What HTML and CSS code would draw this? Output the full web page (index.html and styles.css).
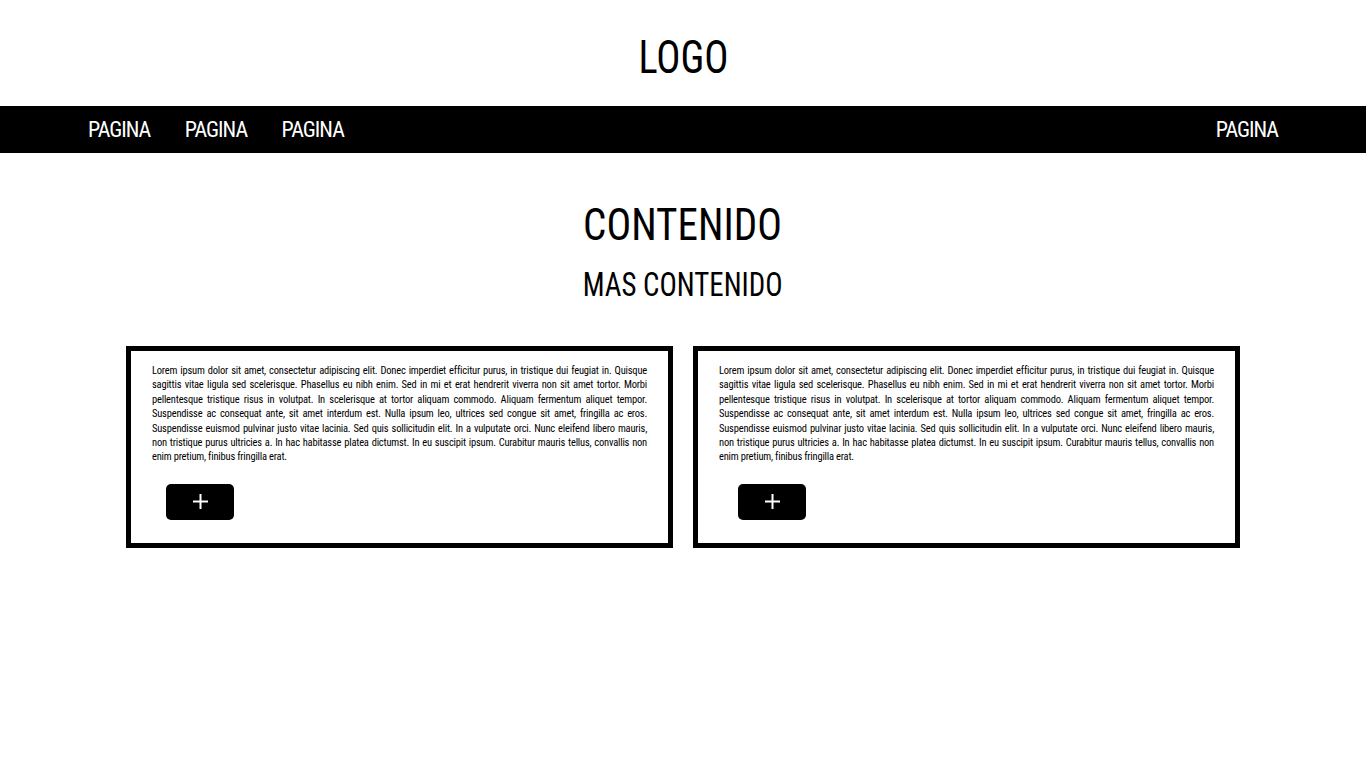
FILE: index.html
```html
<!DOCTYPE html>
<html lang="es">
<head>
    <meta charset="UTF-8">
    <meta name="viewport" content="width=device-width, initial-scale=1.0">
    <title>Pagina</title>
    <link rel="stylesheet" href="styles.css">
</head>
<body>
    <header class="header">
        <div class="logo">LOGO</div>
    </header>

    <nav class="navbar">
        <div class="nav-left">
            <a href="#" class="nav-link">PAGINA</a>
            <a href="#" class="nav-link">PAGINA</a>
            <a href="#" class="nav-link">PAGINA</a>
        </div>
        <a href="#" class="nav-link">PAGINA</a>
    </nav>

    <main class="main">
        <h1 class="title">CONTENIDO</h1>
        <h2 class="subtitle">MAS CONTENIDO</h2>

        <div class="cards">
            <div class="card">
                <p class="card-text">Lorem ipsum dolor sit amet, consectetur adipiscing elit. Donec imperdiet efficitur purus, in tristique dui feugiat in. Quisque sagittis vitae ligula sed scelerisque. Phasellus eu nibh enim. Sed in mi et erat hendrerit viverra non sit amet tortor. Morbi pellentesque tristique risus in volutpat. In scelerisque at tortor aliquam commodo. Aliquam fermentum aliquet tempor. Suspendisse ac consequat ante, sit amet interdum est. Nulla ipsum leo, ultrices sed congue sit amet, fringilla ac eros. Suspendisse euismod pulvinar justo vitae lacinia. Sed quis sollicitudin elit. In a vulputate orci. Nunc eleifend libero mauris, non tristique purus ultricies a. In hac habitasse platea dictumst. In eu suscipit ipsum. Curabitur mauris tellus, convallis non enim pretium, finibus fringilla erat.</p>
                <button class="card-button">
                    <svg width="15" height="15" viewBox="0 0 15 15"><path d="M7.5 0V15M0 7.5H15" stroke="#fff" stroke-width="2"/></svg>
                </button>
            </div>
            <div class="card">
                <p class="card-text">Lorem ipsum dolor sit amet, consectetur adipiscing elit. Donec imperdiet efficitur purus, in tristique dui feugiat in. Quisque sagittis vitae ligula sed scelerisque. Phasellus eu nibh enim. Sed in mi et erat hendrerit viverra non sit amet tortor. Morbi pellentesque tristique risus in volutpat. In scelerisque at tortor aliquam commodo. Aliquam fermentum aliquet tempor. Suspendisse ac consequat ante, sit amet interdum est. Nulla ipsum leo, ultrices sed congue sit amet, fringilla ac eros. Suspendisse euismod pulvinar justo vitae lacinia. Sed quis sollicitudin elit. In a vulputate orci. Nunc eleifend libero mauris, non tristique purus ultricies a. In hac habitasse platea dictumst. In eu suscipit ipsum. Curabitur mauris tellus, convallis non enim pretium, finibus fringilla erat.</p>
                <button class="card-button card-button-right">
                    <svg width="15" height="15" viewBox="0 0 15 15"><path d="M7.5 0V15M0 7.5H15" stroke="#fff" stroke-width="2"/></svg>
                </button>
            </div>
        </div>
    </main>
</body>
</html>
```

FILE: styles.css
```css
body {
    margin: 0;
    padding: 0;
    background-color: #fff;
    color: #000;
    font-family: "Roboto Condensed", "Liberation Sans Narrow", "DejaVu Sans Condensed", sans-serif;
}

.header {
    height: 106px;
    display: flex;
    justify-content: center;
    align-items: center;
}

/* la fuente del diseño es mas estrecha, se comprime en horizontal */
.logo {
    font-size: 46px;
    line-height: 1;
    padding-top: 7px;
    transform: scaleX(0.876);
}

.navbar {
    height: 47px;
    background-color: #000;
    display: flex;
    justify-content: space-between;
    align-items: center;
    padding: 0 88px;
}

.nav-left {
    display: flex;
    gap: 34.5px;
}

.nav-link {
    color: #fff;
    text-decoration: none;
    font-size: 22px;
    letter-spacing: -1px;
}

.main {
    display: flex;
    flex-direction: column;
    align-items: center;
    padding-top: 44px;
}

.title {
    margin: 0;
    font-size: 44.5px;
    font-weight: normal;
    line-height: 56px;
    transform: scaleX(0.925);
}

.subtitle {
    margin: 9px 0 0;
    font-size: 34px;
    font-weight: normal;
    line-height: 44px;
    transform: scaleX(0.85);
}

.cards {
    display: flex;
    gap: 20px;
    margin-top: 40px;
    width: 1114px;
}

.card {
    flex: 1;
    border: 5px solid #000;
    padding: 13px 21px 23px;
}

.card-text {
    margin: 0;
    font-size: 10.5px;
    letter-spacing: -0.2px;
    line-height: 14.4px;
    text-align: justify;
}

.card-button {
    display: flex;
    justify-content: center;
    align-items: center;
    margin: 19px 0 0 14px;
    padding: 0;
    width: 68px;
    height: 36px;
    border: none;
    border-radius: 5px;
    background-color: #000;
    cursor: pointer;
}

.card-button-right {
    margin-left: 19px;
}
```
